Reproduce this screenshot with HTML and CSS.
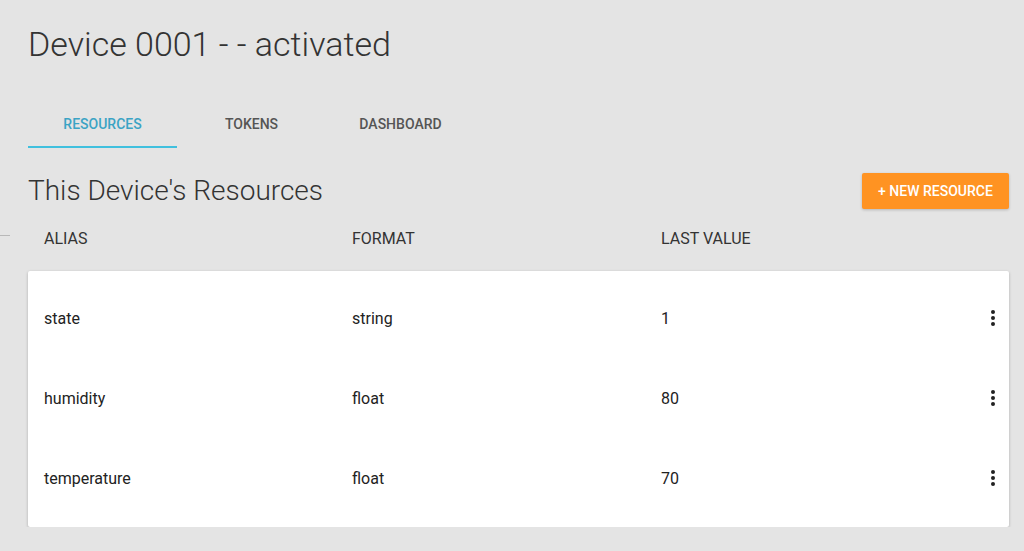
FILE: index.html
```html
<!DOCTYPE html>
<html>
<head>
<meta charset="utf-8">
<link rel="stylesheet" href="styles.css">
</head>
<body>
<div class="edge-mark"></div>
<main class="page">
  <h1 class="title">Device 0001 - - activated</h1>
  <nav class="tabs">
    <div class="tab active">RESOURCES</div>
    <div class="tab">TOKENS</div>
    <div class="tab">DASHBOARD</div>
  </nav>
  <div class="section-head">
    <h2 class="section-title">This Device's Resources</h2>
    <button class="btn">+ NEW RESOURCE</button>
  </div>
  <div class="cols head-row">
    <div>ALIAS</div><div>FORMAT</div><div>LAST VALUE</div><div></div>
  </div>
  <div class="card">
    <div class="cols row"><div>state</div><div>string</div><div>1</div>
      <div class="menu"><svg viewBox="0 0 24 24" width="24" height="24"><circle cx="12" cy="6" r="2"/><circle cx="12" cy="12" r="2"/><circle cx="12" cy="18" r="2"/></svg></div></div>
    <div class="cols row"><div>humidity</div><div>float</div><div>80</div>
      <div class="menu"><svg viewBox="0 0 24 24" width="24" height="24"><circle cx="12" cy="6" r="2"/><circle cx="12" cy="12" r="2"/><circle cx="12" cy="18" r="2"/></svg></div></div>
    <div class="cols row"><div>temperature</div><div>float</div><div>70</div>
      <div class="menu"><svg viewBox="0 0 24 24" width="24" height="24"><circle cx="12" cy="6" r="2"/><circle cx="12" cy="12" r="2"/><circle cx="12" cy="18" r="2"/></svg></div></div>
  </div>
</main>
</body>
</html>
```
FILE: styles.css
```css
html, body {
  margin: 0;
  padding: 0;
  background: #e4e4e4;
  font-family: Roboto, "Liberation Sans", sans-serif;
  color: #222;
}
.edge-mark {
  position: absolute;
  left: 0;
  top: 235px;
  width: 10px;
  height: 1px;
  background: #b8b8b8;
}
.page {
  padding: 0 15px 0 28px;
}
.title {
  margin: 0;
  padding-top: 22px;
  font-size: 34px;
  font-weight: 300;
  line-height: 44px;
  color: #333;
  letter-spacing: 0;
}
.tabs {
  display: flex;
  margin-top: 34px;
}
.tab {
  width: 149px;
  height: 48px;
  line-height: 48px;
  text-align: center;
  font-size: 14px;
  font-weight: 500;
  color: #555;
  box-sizing: border-box;
}
.tab.active {
  color: #3ba3c4;
  border-bottom: 2px solid #40c0de;
}
.section-head {
  display: flex;
  justify-content: space-between;
  align-items: flex-start;
  margin-top: 25px;
}
.section-title {
  margin: 0;
  font-size: 28px;
  font-weight: 300;
  line-height: 36px;
  color: #333;
}
.btn {
  width: 147px;
  height: 36px;
  border: none;
  border-radius: 2px;
  background: #ff9322;
  color: #fff;
  font-family: Roboto, "Liberation Sans", sans-serif;
  font-size: 14px;
  font-weight: 500;
  padding: 0;
  box-shadow: 0 1px 3px rgba(0,0,0,0.2);
}
.cols {
  display: grid;
  grid-template-columns: 308px 309px 1fr 48px;
  padding-left: 16px;
  align-items: center;
}
.head-row {
  height: 62px;
  box-sizing: border-box;
  padding-bottom: 4px;
  font-size: 16px;
  color: #333;
}
.card {
  background: #fff;
  border-radius: 2px;
  padding: 7px 0 9px;
  box-shadow: 0 1px 3px rgba(0,0,0,0.25);
}
.row {
  height: 80px;
  font-size: 16px;
  color: #222;
}
.menu {
  display: flex;
  justify-content: center;
}
.menu svg {
  fill: #222;
  display: block;
  margin-left: 16px;
}
```
